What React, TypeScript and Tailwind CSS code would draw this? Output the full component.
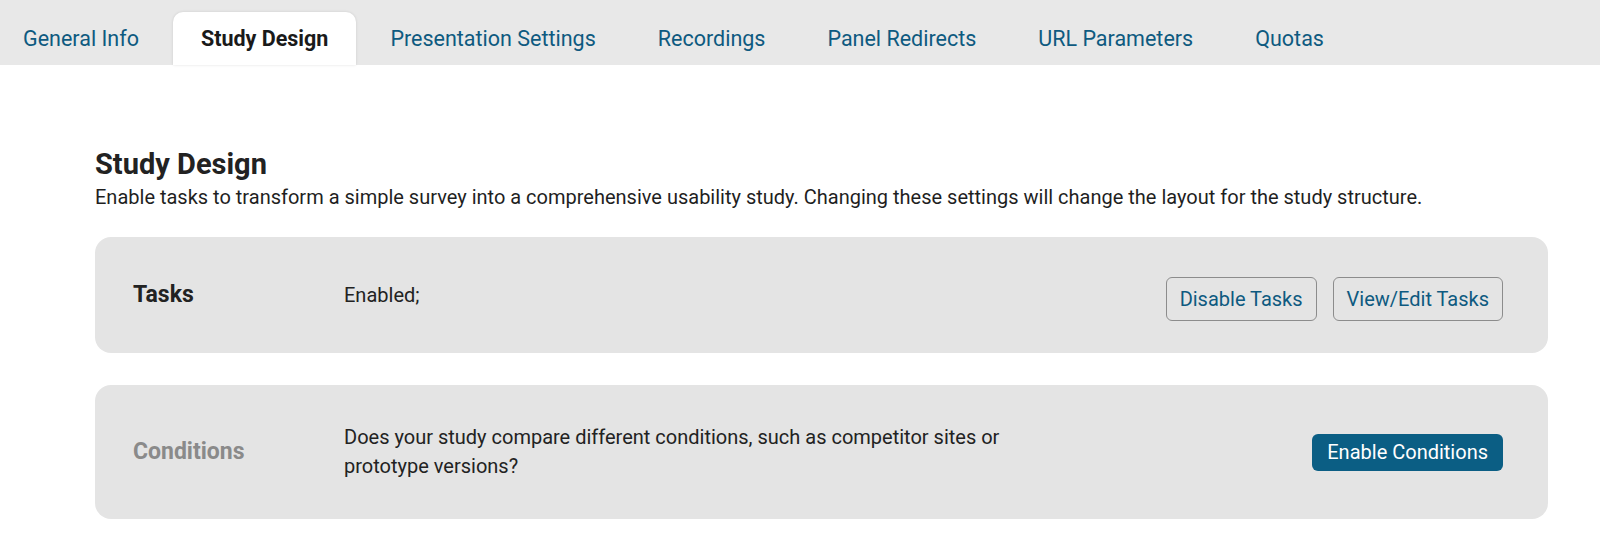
import React from "react"

const tabs = [
  "General Info",
  "Study Design",
  "Presentation Settings",
  "Recordings",
  "Panel Redirects",
  "URL Parameters",
  "Quotas",
]

export default function App() {
  const active = "Study Design"

  return (
    <div className="min-h-[552px] bg-white font-['Roboto',sans-serif] text-[#222]">
      {/* Tab bar */}
      <div className="h-[65px] bg-[#e8e8e8] flex items-end">
        <nav className="flex gap-[6px] -ml-[5px]">
          {tabs.map((t) =>
            t === active ? (
              <div
                key={t}
                className="h-[53px] px-[28px] flex items-center pt-[2px] bg-white rounded-t-[10px] shadow-[0_0_3px_rgba(0,0,0,0.12)] text-[21.5px] font-bold text-[#1a1a1a]"
              >
                {t}
              </div>
            ) : (
              <div
                key={t}
                className="h-[53px] px-[28px] flex items-center pt-[2px] text-[21.5px] text-[#0e5a80]"
              >
                {t}
              </div>
            )
          )}
        </nav>
      </div>

      {/* Content */}
      <div className="pl-[95px] pr-[52px] pt-[82px]">
        <h1 className="text-[29px] leading-[34px] font-bold text-[#222]">Study Design</h1>
        <p className="mt-[2px] text-[20px] leading-[28px] text-[#1f1f1f]">
          Enable tasks to transform a simple survey into a comprehensive usability study. Changing these settings will change the layout for the study structure.
        </p>

        <div className="mt-[26px] flex flex-col gap-[32px]">
          {/* Tasks */}
          <div className="h-[116px] rounded-[16px] bg-[#e4e4e4] pl-[38px] pr-[45px] flex items-center">
            <div className="w-[211px] text-[23px] font-bold text-[#222]">Tasks</div>
            <div className="flex-1 text-[20px] text-[#222]">Enabled;</div>
            <div className="flex gap-[16px] mt-[8px]">
              <button className="h-[44px] px-[13px] rounded-[6px] border-[1.5px] border-[#8c8c8c] text-[20px] text-[#0e5a80]">
                Disable Tasks
              </button>
              <button className="h-[44px] px-[13px] rounded-[6px] border-[1.5px] border-[#8c8c8c] text-[20px] text-[#0e5a80]">
                View/Edit Tasks
              </button>
            </div>
          </div>

          {/* Conditions */}
          <div className="h-[134px] rounded-[16px] bg-[#e4e4e4] pl-[38px] pr-[45px] flex items-center">
            <div className="w-[211px] text-[23px] font-bold text-[#8a8a8a]">Conditions</div>
            <div className="flex-1">
              <p className="max-w-[670px] text-[20px] leading-[29px] text-[#222]">
                Does your study compare different conditions, such as competitor sites or prototype versions?
              </p>
            </div>
            <button className="h-[37px] px-[15px] rounded-[6px] bg-[#0b5e84] text-[20px] text-white">
              Enable Conditions
            </button>
          </div>
        </div>
      </div>
    </div>
  )
}
